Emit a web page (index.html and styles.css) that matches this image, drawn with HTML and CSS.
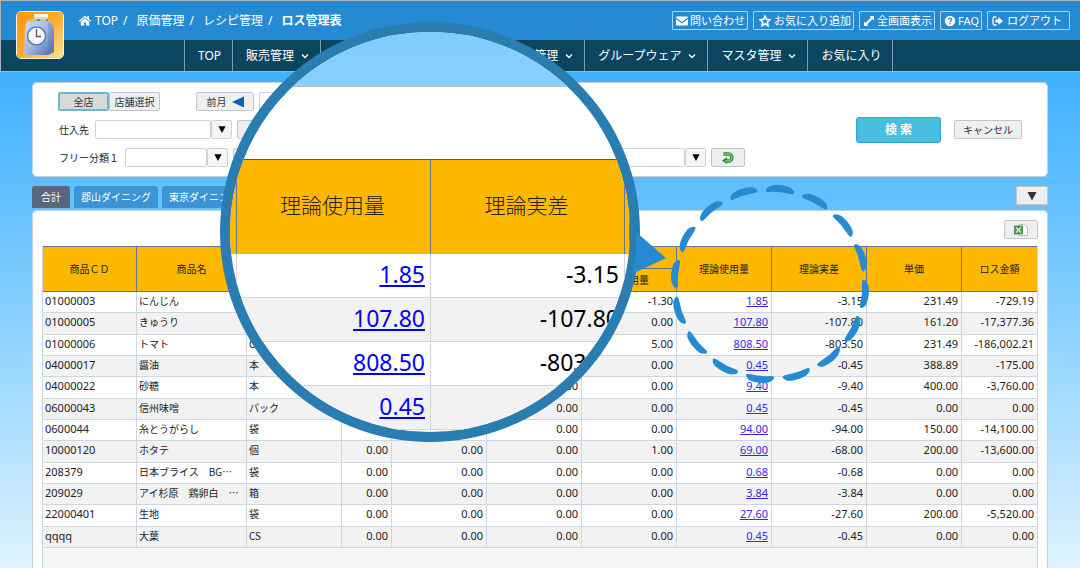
FILE: index.html
```html
<!DOCTYPE html>
<html lang="ja">
<head>
<meta charset="utf-8">
<title>ロス管理表</title>
<link rel="stylesheet" href="styles.css">
</head>
<body>
<svg class="defs" aria-hidden="true">
  <symbol id="i-chev" viewBox="0 0 8 6"><path d="M1 1.500 4 4.500 7 1.500" fill="none" stroke="currentColor" stroke-width="1.300"/></symbol>
  <symbol id="i-down" viewBox="0 0 10 10"><path d="M0.500 1h9L5 9.500z" fill="currentColor"/></symbol>
  <symbol id="i-back" viewBox="0 0 14 12">
    <path d="M2.500 2H7.500a3.500 3.500 0 0 1 0 7H5" fill="none" stroke="#2f8a34" stroke-width="3.400"/>
    <path d="M6 5v7L1 8.800z" fill="#2f8a34"/>
    <path d="M2.500 2H7.500a3.500 3.500 0 0 1 0 7H4" fill="none" stroke="#7cc67c" stroke-width="1.400"/>
  </symbol>
</svg>

<header class="header">
  <a class="logo" href="#" aria-label="ホーム">
    <svg viewBox="0 0 46 46" aria-hidden="true">
      <defs>
        <linearGradient id="lg" x1="0" y1="0" x2="1" y2="1"><stop offset="0" stop-color="#ff9505"/><stop offset=".5" stop-color="#ffac28"/><stop offset="1" stop-color="#ffe39a"/></linearGradient>
        <linearGradient id="jar" x1="0" y1="0" x2="1" y2="1"><stop offset="0" stop-color="#d3def3"/><stop offset=".5" stop-color="#a3b8e0"/><stop offset="1" stop-color="#4468ac"/></linearGradient>
      </defs>
      <rect width="46" height="46" fill="url(#lg)"/>
      <path d="M12 8h19c4 3 6 6 6 11v21l-6 3H10l-3-2 1-24c0-4 1-7 4-9z" fill="url(#jar)"/>
      <path d="M31 9c4 3 6 6 6 10v21l-6 3z" fill="#5f7db8" opacity=".35"/>
      <path d="M13 7h18l2 3H11z" fill="#b9d27c"/>
      <path d="M14 7h3v2h-3zM25 7h3v2h-3z" fill="#e8c545"/><path d="M20 7h3v2h-3zM29 7h2v2h-2z" fill="#3aa3bc"/>
      <path d="M17 2h14v5H17z" fill="#f4f4f2"/><path d="M17 5h14v2H17z" fill="#d5d8db"/>
      <circle cx="19.500" cy="24" r="9" fill="#f7f8fa" stroke="#5f7cb4" stroke-width="1.500"/>
      <path d="M19.500 17v7.500h4.500" fill="none" stroke="#6a5353" stroke-width="1.300"/>
    </svg>
  </a>
  <div class="topbar">
    <nav class="crumbs" aria-label="パンくず">
      <svg class="home" viewBox="0 0 12 11" aria-hidden="true"><path d="M6 0.500 0 5.800l.8.900L6 2.200l5.200 4.500.8-.9L10 4V1H8.500v1.700zM6 3.200 1.800 6.800V10.500H5V7.500h2v3h3.200V6.800z" fill="currentColor"/></svg>
      <a href="#">TOP</a><span class="slash">/</span>
      <a href="#">原価管理</a><span class="slash">/</span>
      <a href="#">レシピ管理</a><span class="slash">/</span>
      <strong>ロス管理表</strong>
    </nav>
    <div class="tools">
      <a class="tool" href="#"><svg viewBox="0 0 12 12" aria-hidden="true"><path d="M0 2.500Q0 1.500 1 1.500H11Q12 1.500 12 2.500L6 7zM0 4l6 4.500L12 4v5.500Q12 10.500 11 10.500H1Q0 10.500 0 9.500z" fill="currentColor"/></svg>問い合わせ</a>
      <a class="tool wide" href="#"><svg viewBox="0 0 12 12" aria-hidden="true"><path d="M6 1.200 7.400 4.300l3.500.4-2.600 2.400.7 3.500L6 8.900l-3 1.700.7-3.500L1.100 4.700l3.500-.4z" fill="none" stroke="currentColor" stroke-width="1.700"/></svg>お気に入り追加</a>
      <a class="tool" href="#"><svg viewBox="0 0 12 12" aria-hidden="true"><path d="M11 1v4.500L9.600 4.100 4.100 9.600 5.500 11H1V6.500L2.400 7.900 7.900 2.400 6.500 1z" fill="currentColor"/></svg>全画面表示</a>
      <a class="tool" href="#"><svg viewBox="0 0 12 12" aria-hidden="true"><circle cx="6" cy="6" r="5.200" fill="currentColor"/><path d="M4.300 4.600C4.500 2.700 7.700 2.800 7.600 4.600 7.500 5.700 6.100 5.700 6.100 7" fill="none" stroke="#268ad2" stroke-width="1.300"/><path d="M5.400 7.800h1.400v1.400H5.400z" fill="#268ad2"/></svg>FAQ</a>
      <a class="tool wide last" href="#"><svg viewBox="0 0 12 12" aria-hidden="true"><path d="M4.500 2H2.500Q1 2 1 3.500v5Q1 10 2.500 10h2" fill="none" stroke="currentColor" stroke-width="1.300"/><path d="M3.500 4.500H6.500V2L11 6 6.500 10V7.500h-3z" fill="currentColor"/></svg>ログアウト</a>
    </div>
  </div>
  <nav class="menu" aria-label="メインメニュー">
    <a href="#">TOP</a>
    <a href="#">販売管理<svg aria-hidden="true"><use href="#i-chev"/></svg></a>
    <a href="#">仕入管理<svg aria-hidden="true"><use href="#i-chev"/></svg></a>
    <a href="#">原価管理<svg aria-hidden="true"><use href="#i-chev"/></svg></a>
    <a href="#">勤怠管理<svg aria-hidden="true"><use href="#i-chev"/></svg></a>
    <a href="#">グループウェア<svg aria-hidden="true"><use href="#i-chev"/></svg></a>
    <a href="#">マスタ管理<svg aria-hidden="true"><use href="#i-chev"/></svg></a>
    <a href="#">お気に入り</a>
  </nav>
</header>

<main class="main">
  <form class="panel search">
    <div class="filters">
      <div class="row">
        <div class="toggle"><button type="button" class="btn on">全店</button><button type="button" class="btn">店舗選択</button></div>
        <button type="button" class="btn prev">前月<svg viewBox="0 0 12 12" aria-hidden="true"><path d="M12 0.500v11L0 6z" fill="#0a5fc0"/></svg></button>
        <input class="field month" type="text" aria-label="対象月">
      </div>
      <div class="row">
        <label for="supplier">仕入先</label>
        <div class="combo"><input id="supplier" class="field w115" type="text"><button type="button" class="btn drop" aria-label="仕入先を選択"><svg aria-hidden="true"><use href="#i-down"/></svg></button></div>
        <button type="button" class="btn undo" aria-label="仕入先を戻す"><svg aria-hidden="true"><use href="#i-back"/></svg></button>
      </div>
      <div class="row">
        <label for="free1">フリー分類１</label>
        <div class="combo"><input id="free1" class="field w81" type="text"><button type="button" class="btn drop" aria-label="分類１を選択"><svg aria-hidden="true"><use href="#i-down"/></svg></button></div>
        <button type="button" class="btn undo" aria-label="分類１を戻す"><svg aria-hidden="true"><use href="#i-back"/></svg></button>
        <div class="combo grow"><input class="field" type="text" aria-label="フリー分類２"><button type="button" class="btn drop" aria-label="分類２を選択"><svg aria-hidden="true"><use href="#i-down"/></svg></button></div>
        <button type="button" class="btn undo" aria-label="分類２を戻す"><svg aria-hidden="true"><use href="#i-back"/></svg></button>
      </div>
    </div>
    <div class="actions">
      <button type="submit" class="submit">検 索</button>
      <button type="reset" class="btn cancel">キャンセル</button>
    </div>
  </form>

  <div class="tabs">
    <button type="button" class="tab active">合計</button>
    <button type="button" class="tab">郡山ダイニング</button>
    <button type="button" class="tab">東京ダイニング</button>
    <button type="button" class="btn more" aria-label="開く"><svg aria-hidden="true"><use href="#i-down"/></svg></button>
  </div>

  <section class="panel result">
    <div class="export">
      <button type="button" class="btn undo" aria-label="Excel出力"><svg viewBox="0 0 14 12" aria-hidden="true"><path d="M5 .5h6l2.500 2.500v8.500H5z" fill="#fff" stroke="#b9c4b9"/><path d="M0 1.500h9v9H0z" fill="#4c9450"/><path d="M2 3.500l5 5M7 3.500l-5 5" stroke="#e1f2dc" stroke-width="1.400"/></svg></button>
    </div>
    <div class="sheet">
      <table class="grid">
        <colgroup><col class="c94"><col class="c110"><col class="c95"><col class="c50"><col class="c95"><col class="c95"><col class="c95"><col class="c95"><col class="c95"><col class="c95"><col></colgroup>
        <thead>
          <tr><th rowspan="2">商品ＣＤ</th><th rowspan="2">商品名</th><th rowspan="2"></th><th rowspan="2"></th><th colspan="3"></th><th rowspan="2">理論使用量</th><th rowspan="2">理論実差</th><th rowspan="2">単価</th><th rowspan="2">ロス金額</th></tr>
          <tr><th></th><th></th><th>実使用量</th></tr>
        </thead>
        <tbody>
          <tr><td>01000003</td><td>にんじん</td><td></td><td></td><td></td><td></td><td>-1.30</td><td><a href="#">1.85</a></td><td>-3.15</td><td>231.49</td><td>-729.19</td></tr>
          <tr><td>01000005</td><td>きゅうり</td><td></td><td></td><td></td><td></td><td>0.00</td><td><a href="#">107.80</a></td><td>-107.80</td><td>161.20</td><td>-17,377.36</td></tr>
          <tr><td>01000006</td><td>トマト</td><td>CS</td><td></td><td></td><td></td><td>5.00</td><td><a href="#">808.50</a></td><td>-803.50</td><td>231.49</td><td>-186,002.21</td></tr>
          <tr><td>04000017</td><td>醤油</td><td>本</td><td></td><td></td><td></td><td>0.00</td><td><a href="#">0.45</a></td><td>-0.45</td><td>388.89</td><td>-175.00</td></tr>
          <tr><td>04000022</td><td>砂糖</td><td>本</td><td></td><td></td><td>0.00</td><td>0.00</td><td><a href="#">9.40</a></td><td>-9.40</td><td>400.00</td><td>-3,760.00</td></tr>
          <tr><td>06000043</td><td>信州味噌</td><td>パック</td><td></td><td></td><td>0.00</td><td>0.00</td><td><a href="#">0.45</a></td><td>-0.45</td><td>0.00</td><td>0.00</td></tr>
          <tr><td>0600044</td><td>糸とうがらし</td><td>袋</td><td></td><td></td><td>0.00</td><td>0.00</td><td><a href="#">94.00</a></td><td>-94.00</td><td>150.00</td><td>-14,100.00</td></tr>
          <tr><td>10000120</td><td>ホタテ</td><td>個</td><td>0.00</td><td>0.00</td><td>0.00</td><td>1.00</td><td><a href="#">69.00</a></td><td>-68.00</td><td>200.00</td><td>-13,600.00</td></tr>
          <tr><td>208379</td><td>日本ブライス　BG…</td><td>袋</td><td>0.00</td><td>0.00</td><td>0.00</td><td>0.00</td><td><a href="#">0.68</a></td><td>-0.68</td><td>0.00</td><td>0.00</td></tr>
          <tr><td>209029</td><td>アイ杉原　鶏卵白　…</td><td>箱</td><td>0.00</td><td>0.00</td><td>0.00</td><td>0.00</td><td><a href="#">3.84</a></td><td>-3.84</td><td>0.00</td><td>0.00</td></tr>
          <tr><td>22000401</td><td>生地</td><td>袋</td><td>0.00</td><td>0.00</td><td>0.00</td><td>0.00</td><td><a href="#">27.60</a></td><td>-27.60</td><td>200.00</td><td>-5,520.00</td></tr>
          <tr><td>qqqq</td><td>大葉</td><td>CS</td><td>0.00</td><td>0.00</td><td>0.00</td><td>0.00</td><td><a href="#">0.45</a></td><td>-0.45</td><td>0.00</td><td>0.00</td></tr>
        </tbody>
      </table>
    </div>
  </section>
</main>

<svg class="ring" viewBox="-100 -100 200 200" aria-hidden="true">
  <g id="q"><path id="d" d="M-4-93.500C-4-96-1-97.500 2-98.500 8-99.500 16-98.500 21-96 23-94 24.500-92 24-90.500Q22-89.500 19-90.300 9-92.700-2-92-4-92-4-93.500z" fill="#268ad2"/><use href="#d" transform="rotate(22.5)"/><use href="#d" transform="rotate(45)"/><use href="#d" transform="rotate(67.5)"/></g>
  <use href="#q" transform="rotate(90)"/><use href="#q" transform="rotate(180)"/><use href="#q" transform="rotate(270)"/>
</svg>

<div class="lens">
  <div class="lens-sky"></div>
  <div class="lens-gap"></div>
  <table class="zoomed">
    <colgroup><col class="z-edge"><col class="z-main"><col class="z-main"><col></colgroup>
    <thead><tr><th></th><th>理論使用量</th><th>理論実差</th><th></th></tr></thead>
    <tbody>
      <tr><td></td><td><a href="#">1.85</a></td><td>-3.15</td><td></td></tr>
      <tr><td></td><td><a href="#">107.80</a></td><td>-107.80</td><td></td></tr>
      <tr><td></td><td><a href="#">808.50</a></td><td>-803.50</td><td></td></tr>
      <tr><td></td><td><a href="#">0.45</a></td><td></td><td></td></tr>
      <tr><td></td><td></td><td></td><td></td></tr>
    </tbody>
  </table>
</div>
<svg class="pointer" viewBox="0 0 34 42" aria-hidden="true"><path d="M4 0 34 26 0 42Q5 22 4 0z" fill="#268ad2"/></svg>
</body>
</html>
```

FILE: styles.css
```css
* { box-sizing: border-box; }

body {
  position: relative;
  display: flex;
  flex-direction: column;
  height: 100vh;
  margin: 0;
  overflow: hidden;
  color: #222;
  background: linear-gradient(#40b1ff 72px, #6fc5ff 240px, #a4dcff 400px, #dff2ff);
  font: 10px/14px "Noto Sans", "Noto Sans CJK JP", sans-serif;
}

a { color: inherit; text-decoration: none; }
button, input { margin: 0; font: inherit; color: inherit; }
.defs { position: absolute; width: 0; height: 0; }

/* Header */
.header {
  position: relative;
  flex: none;
  border: solid #a9b3bb;
  border-width: 1px 0 1px 1px;
  color: #fff;
  font-size: 12px;
  line-height: 18px;
}
.logo {
  position: absolute;
  left: 15px;
  top: 10px;
  width: 48px;
  height: 48px;
  border: 1px solid #fff4dc;
  border-radius: 5px;
  overflow: hidden;
}
.logo svg { display: block; width: 100%; height: 100%; }
.topbar {
  display: flex;
  align-items: center;
  justify-content: space-between;
  height: 39px;
  padding: 0 10px 0 78px;
  background: #268ad2;
}
.crumbs { display: flex; align-items: center; }
.home { width: 12px; height: 11px; margin-right: 4px; }
.slash { margin: 0 9px 0 5px; }
.tools { display: flex; gap: 5px; font-size: 11px; line-height: 17px; }
.tool {
  display: flex;
  align-items: center;
  gap: 2px;
  padding: 0 2px 0 3px;
  border: 1px solid #a9d4f3;
  border-radius: 1px;
}
.tool svg { width: 12px; height: 12px; }
.tool.wide { gap: 3px; padding-left: 5px; }
.tool.last { padding-left: 4px; padding-right: 7px; }
.menu {
  display: flex;
  height: 31px;
  padding-left: 183px;
  background: #0c455f;
}
.menu a {
  display: flex;
  align-items: center;
  gap: 7px;
  padding: 0 11px 0 13px;
  border-left: 1px solid #7f9eac;
}
.menu a:last-child { border-right: 1px solid #7f9eac; }
.menu svg { width: 8px; height: 6px; }

/* Shared controls */
.main {
  flex: 1;
  display: flex;
  flex-direction: column;
  min-height: 0;
  padding: 10px 32px 0;
}
.panel {
  border: 1px solid #c3d3de;
  border-radius: 5px;
  background: #fff;
}
.btn {
  display: flex;
  align-items: center;
  justify-content: center;
  height: 19px;
  padding: 0;
  border: 1px solid #c2c4c6;
  border-radius: 2px;
  background: #eeeff0;
  color: #333;
}
.field {
  height: 19px;
  min-width: 0;
  padding: 0 4px;
  border: 1px solid #d2d2d2;
  border-radius: 2px;
  background: #fff;
}
.w115 { width: 116px; }
.w81 { width: 82px; }
.month { width: 120px; }

/* Search panel */
.search {
  display: flex;
  justify-content: space-between;
  padding: 9px 25px;
}
.filters {
  display: flex;
  flex-direction: column;
  gap: 9px;
  flex: 0 1 687px;
}
.row { display: flex; align-items: center; gap: 5px; }
.row label { padding: 0 1px; }
.toggle { display: flex; margin-right: 31px; }
.toggle .btn { width: 51px; }
.toggle .on { border: 2px solid #72b7c8; background: #d9d9d9; }
.prev { width: 58px; gap: 5px; }
.prev svg { width: 12px; height: 12px; }
.combo { display: flex; }
.combo.grow { flex: 1; margin-left: 60px; }
.combo.grow .field { flex: 1; }
.drop { width: 21px; border-color: #d2d2d2; background: #f5f5f5; color: #000; }
.drop svg { width: 8px; height: 9px; }
.more svg { width: 10px; height: 10px; }
.undo { width: 34px; }
.undo svg { width: 14px; height: 12px; }
.actions { display: flex; align-items: center; gap: 13px; }
.submit {
  width: 85px;
  height: 26px;
  border: 1px solid #2ea7c6;
  border-radius: 3px;
  background: #49bfe0;
  color: #fff;
  font-size: 12px;
  font-weight: bold;
}
.cancel { width: 68px; }

/* Tabs */
.tabs { display: flex; gap: 4px; margin-top: 9px; height: 24px; }
.tab {
  height: 22px;
  padding: 0 7px;
  border: 0;
  border-radius: 3px 3px 0 0;
  background: #3a95d7;
  color: #fff;
}
.tab.active { padding: 0 9px; background: #5a667e; }
.more { width: 32px; margin-left: auto; border-radius: 0; }

/* Result table */
.result {
  flex: 1;
  display: flex;
  flex-direction: column;
  min-height: 0;
  padding: 9px 9px 0;
  border-bottom: 0;
  border-radius: 5px 5px 0 0;
}
.export { display: flex; justify-content: flex-end; margin-bottom: 7px; }
.sheet {
  flex: 1;
  min-height: 0;
  border: solid #cdd7e4;
  border-width: 0 1px;
  background: #f5f6f6;
}
.grid {
  width: 100%;
  height: 302px;
  table-layout: fixed;
  border-collapse: separate;
  border-spacing: 0;
  background: #fff;
}
.c94 { width: 94px; }
.c95 { width: 95px; }
.c110 { width: 110px; }
.c50 { width: 50px; }
.grid th {
  height: 23px;
  padding: 0;
  border: solid #66768f;
  border-width: 0 1px 1px 0;
  background: #ffb800;
  font-weight: normal;
}
.grid thead tr:first-child th { border-top: 1px solid #66768f; }
.grid thead tr:first-child th:last-child { border-right: 0; }
.grid td {
  padding: 0 3px 2px;
  border: solid #cdd7e4;
  border-width: 0 1px 1px 0;
  font-size: 11px;
  text-align: right;
  white-space: nowrap;
}
.grid td:last-child { border-right: 0; }
.grid td:nth-child(-n+3) { padding-left: 2px; text-align: left; }
.grid td:nth-child(2), .grid td:nth-child(3) {
  font-family: "Noto Sans CJK JP", sans-serif;
  font-size: 10px;
}
.grid tbody tr:nth-child(even) td { background: #f2f2f2; }
.grid td a, .zoomed a { color: #00f; text-decoration: underline; }
.grid td a { color: #3428f0; }

/* Magnifier overlay */
.ring { position: absolute; left: 670px; top: 184px; width: 200px; height: 200px; }
.lens {
  position: absolute;
  left: 220px;
  top: 22px;
  width: 420px;
  height: 420px;
  border: 10px solid #2a7db0;
  border-radius: 50%;
  overflow: hidden;
  background: #fff;
}
.lens-sky {
  height: 55px;
  border-bottom: 1px solid #b5bfc6;
  background: linear-gradient(#7fccff, #8ad0ff);
}
.lens-gap { height: 72px; }
.zoomed {
  width: 100%;
  table-layout: fixed;
  border-collapse: separate;
  border-spacing: 0;
}
.z-edge { width: 7px; }
.z-main { width: 194px; }
.zoomed th {
  height: 95px;
  padding: 0 2px 4px 0;
  border-top: 1px solid #4c5a70;
  border-right: 1px solid #66768f;
  background: #ffb800;
  font-size: 21px;
  font-weight: 300;
  line-height: 30px;
}
.zoomed td {
  height: 44px;
  padding: 0 5px 4px;
  border: solid #cdd7e4;
  border-width: 0 1px 1px 0;
  color: #000;
  font-size: 23px;
  line-height: 30px;
  text-align: right;
}
.zoomed th:first-child, .zoomed td:first-child,
.zoomed th:last-child, .zoomed td:last-child { padding: 0; }
.zoomed tbody tr:nth-child(even) td { background: #f2f2f2; }
.pointer { position: absolute; left: 632px; top: 232px; width: 34px; height: 42px; }
```
